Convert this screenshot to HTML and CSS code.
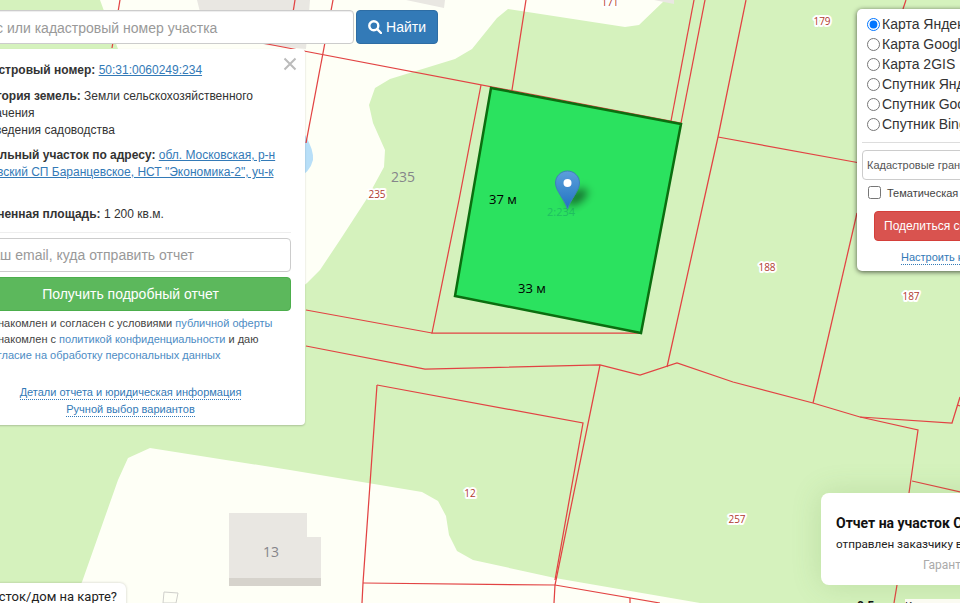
FILE: index.html
```html
<!DOCTYPE html>
<html lang="ru">
<head>
<meta charset="utf-8">
<title>Кадастровая карта</title>
<link rel="stylesheet" href="styles.css">
</head>
<body>
<main class="stage">
  <svg class="map" viewBox="0 0 960 603" width="960" height="603">
    <defs>
      <linearGradient id="pinFill" x1="0" y1="0" x2="0" y2="1">
        <stop offset="0" stop-color="#5c9fdb"/>
        <stop offset="1" stop-color="#1f72c2"/>
      </linearGradient>
      <filter id="blur" x="-60%" y="-60%" width="220%" height="220%"><feGaussianBlur stdDeviation="4"/></filter>
    </defs>
    <rect class="green" width="960" height="603"/>
    <polygon class="cream" points="100,0 665,0 639,25 625,27 508,9 497,18 472,49 455,59 390,79 375,88 369,105 373,123 385,150 384,167 366,200 340,240 320,270 307,283 250,330 118,330 118,49"/>
    <polygon class="cream" points="70,603 82,582 118,480 128,458 150,448 290,470 422,492 438,501 446,516 449,535 457,551 473,560 555,578 700,603"/>
    <path class="water" d="M305,135 Q314,150 313,160 Q310,172 298,178 L298,135 Z"/>
    <polygon class="bld" points="197,0 310,0 306,49 265,45 200,12"/>
    <polygon class="bld" points="406,0 445,0 444,8"/>
    <polygon class="bld" points="654,0 674,0 674,4"/>
    <polygon class="bld" points="229,513 307,513 307,537 321,537 321,586 229,586"/>
    <rect class="bld-side" x="229" y="578" width="92" height="8"/>
    <polygon class="shed" points="164,592 178,593 176,603 163,603"/>
    <g class="lines">
      <path d="M120,0 L112,48"/>
      <path d="M295,0 L288,44"/>
      <path d="M333,0 L306,143"/>
      <path d="M262,43 L681,123"/>
      <path d="M481,85 L459,200 L432,333 L642,333"/>
      <path d="M526,0 L512,90"/>
      <path d="M694,0 L671,121"/>
      <path d="M705,0 L681,123"/>
      <path d="M746,0 L718,137 L704,200 L667,367"/>
      <path d="M718,137 L860,163"/>
      <path d="M906,0 L903,9"/>
      <path d="M857,213 L813,403"/>
      <path d="M306,310 L432,333"/>
      <path d="M306,346 L425,369 L600,365 L640,375 L677,363 L733,382 L813,403 L860,417 L918,430 L909,493"/>
      <path d="M860,417 L952,423 L960,397"/>
      <path d="M957,405 L960,406"/>
      <path d="M912,481 L960,492"/>
      <path d="M897,585 L894,603"/>
      <path d="M600,365 L555,585 L554,603"/>
      <path d="M377,385 L583,423 L555,580"/>
      <path d="M377,385 L363,583 L362,603"/>
      <path d="M363,583 L555,585 L660,603"/>
      <path d="M630,598 L630,603"/>
    </g>
    <polygon class="plot" points="491,88 681,124 641,333 455,296"/>
    <text class="num" x="610" y="6">171</text>
    <text class="num" x="822" y="25">179</text>
    <text class="num" x="377" y="198">235</text>
    <text class="num" x="767" y="271">188</text>
    <text class="num" x="911" y="300">187</text>
    <text class="num" x="470" y="497">12</text>
    <text class="num" x="737" y="523">257</text>
    <text class="addr" x="403" y="182">235</text>
    <text class="addr" x="271" y="557">13</text>
    <text class="plot-num" x="561" y="216">2:234</text>
    <text class="measure" x="489" y="204">37 м</text>
    <text class="measure" x="518" y="293">33 м</text>
    <ellipse class="pin-shadow" cx="577" cy="197" rx="12" ry="6" transform="rotate(-35 577 197)" filter="url(#blur)"/>
    <path class="pin" d="M567.500,209 C565,200 555.500,191 555.500,183 C555.500,176 561,171 567.500,171 C574,171 579.500,176 579.500,183 C579.500,191 570,200 567.500,209 Z"/>
    <circle class="pin-dot" cx="567.500" cy="183" r="4"/>
  </svg>

  <form class="search">
    <input class="search-input" type="text" placeholder="Адрес или кадастровый номер участка">
    <button class="search-btn" type="button">
      <svg class="search-icon" viewBox="0 0 14 14" width="14" height="14"><circle cx="5.800" cy="5.800" r="4.500"/><path d="M9.200 9.200 L13 13"/></svg>
      Найти
    </button>
  </form>

  <section class="info">
    <svg class="close" viewBox="0 0 14 14" width="14" height="14"><path d="M1.500 1.500 L12.500 12.500 M12.500 1.500 L1.500 12.500"/></svg>
    <p class="row row-first"><b>Кадастровый номер:</b> <a href="#">50:31:0060249:234</a></p>
    <p class="row"><b>Категория земель:</b> Земли сельскохозяйственного<br>назначения<br>Для ведения садоводства</p>
    <p class="row"><b>Земельный участок по адресу:</b> <a href="#">обл. Московская, р-н<br>Чеховский СП Баранцевское, НСТ "Экономика-2", уч-к</a><br>&nbsp;</p>
    <p class="row"><b>Уточненная площадь:</b> 1 200 кв.м.</p>
    <hr class="rule">
    <input class="email" type="text" placeholder="Ваш email, куда отправить отчет">
    <button class="get" type="button">Получить подробный отчет</button>
    <p class="terms">Я ознакомлен и согласен с условиями <a href="#">публичной оферты</a><br>Я ознакомлен с <a href="#">политикой конфиденциальности</a> и даю<br><a class="shift" href="#">согласие на обработку персональных данных</a></p>
    <div class="more">
      <a href="#">Детали отчета и юридическая информация</a>
      <a href="#">Ручной выбор вариантов</a>
    </div>
  </section>

  <section class="layers">
    <div class="radios">
      <label><input type="radio" name="m" checked>Карта Яндекс</label>
      <label><input type="radio" name="m">Карта Google</label>
      <label><input type="radio" name="m">Карта 2GIS</label>
      <label><input type="radio" name="m">Спутник Яндекс</label>
      <label><input type="radio" name="m">Спутник Google</label>
      <label><input type="radio" name="m">Спутник Bing</label>
    </div>
    <hr class="layers-rule">
    <select class="borders"><option>Кадастровые границы</option></select>
    <label class="theme"><input type="checkbox">Тематическая карта</label>
    <button class="share" type="button">Поделиться ссылкой</button>
    <a class="tune" href="#">Настроить карту</a>
  </section>

  <aside class="toast">
    <strong>Отчет на участок СНТ</strong>
    <span>отправлен заказчику в течение</span>
    <em>Гарантия качества</em>
  </aside>

  <div class="where">Где участок/дом на карте?</div>
  <div class="scale">0.5 км</div>
  <div class="corner">Контакты</div>
</main>
</body>
</html>
```
FILE: styles.css
```css
* { box-sizing: border-box; }
html, body { margin: 0; height: 100%; overflow: hidden; }
body { font-family: "Liberation Sans", Arial, sans-serif; font-size: 12px; color: #333; }
a { color: #337ab7; }
.stage { position: relative; width: 960px; height: 603px; overflow: hidden; background: #d5f2bd; }
.map { display: block; }
.green { fill: #d5f2bd; }
.cream { fill: #fefff6; }
.water { fill: #b8dff8; }
.bld { fill: #e9e7e2; }
.bld-side { fill: #d6d3cc; }
.shed { fill: #fefff6; stroke: #cfcfcb; stroke-width: 1; }
.lines path { fill: none; stroke: #e24343; stroke-width: 1.250; }
.plot { fill: #2be25f; stroke: #0b6e10; stroke-width: 2.500; stroke-linejoin: miter; }
.num { font: 10px "Open Sans", sans-serif; fill: #b03a2e; text-anchor: middle; paint-order: stroke; stroke: #fff; stroke-width: 4px; stroke-linejoin: round; }
.addr { font: 14px "Open Sans", sans-serif; fill: #85858a; text-anchor: middle; }
.plot-num { font: 11px "Open Sans", sans-serif; fill: #20bf62; text-anchor: middle; }
.measure { font: 13px "Open Sans", sans-serif; fill: #000; }
.pin { fill: url(#pinFill); stroke: #3f7fba; stroke-width: 1; }
.pin-dot { fill: #fff; }
.pin-shadow { fill: rgba(0, 0, 0, .5); }

.search { position: absolute; left: -50px; top: 10px; display: flex; gap: 2px; }
.search-input { width: 404px; height: 34px; padding: 7px 12px 5px; border: 1px solid #ccc; border-radius: 4px; background: #fff; font: 14px "Liberation Sans", sans-serif; box-shadow: inset 0 1px 1px rgba(0,0,0,.075); }
.search-input::placeholder, .email::placeholder { color: #999; opacity: 1; }
.search-btn { display: flex; align-items: center; justify-content: center; gap: 4px; width: 82px; height: 34px; border: 1px solid #2e6da4; border-radius: 4px; background: #337ab7; color: #fff; font: 14px "Liberation Sans", sans-serif; padding: 0; }
.search-icon { fill: none; stroke: #fff; stroke-width: 2.400; stroke-linecap: round; }

.info { position: absolute; left: -45px; top: 49px; width: 350px; height: 376px; padding: 13px 14px 0 15px; background: #fff; border-radius: 4px; box-shadow: 0 1px 2px rgba(0,0,0,.2); line-height: 17px; }
.close { position: absolute; right: 8px; top: 8px; fill: none; stroke: #bbb; stroke-width: 2; }
.row { margin: 0 0 8px; }
.row-first { margin-bottom: 9px; }
.rule { height: 1px; margin: 9px 0 5px; border: 0; background: #eee; }
.email { display: block; width: 100%; height: 34px; padding: 6px 12px; border: 1px solid #ccc; border-radius: 4px; font: 14px "Liberation Sans", sans-serif; }
.get { display: block; width: 100%; height: 34px; margin-top: 5px; border: 1px solid #4cae4c; border-radius: 4px; background: #5cb85c; color: #fff; font: 14px "Liberation Sans", sans-serif; }
.terms { margin: 4px 0 0; padding-left: 6px; font-size: 11px; line-height: 16px; color: #444; }
.terms a { color: #4d8cc4; text-decoration: none; }
.terms .shift { margin-left: 10px; }
.more { display: flex; flex-direction: column; align-items: center; gap: 0; margin-top: 20px; font-size: 11px; line-height: 16px; }
.more a { text-decoration: none; border-bottom: 1px dotted #337ab7; line-height: 14px; padding-top: 2px; }

.layers { position: absolute; left: 857px; top: 9px; width: 230px; height: 262px; padding: 5px 5px 0; background: #fff; border-radius: 5px; box-shadow: 0 1px 5px rgba(0,0,0,.65); }
.radios label { display: flex; align-items: center; height: 20px; font-size: 14px; color: #333; }
.radios input { width: 13px; height: 13px; margin: 0 2px 0 5px; flex: none; }
.layers-rule { height: 1px; margin: 8px 0 7px; border: 0; background: #ddd; }
.borders { display: block; width: 220px; height: 30px; padding: 0; border: 1px solid #ccc; border-radius: 4px; background: #fff; color: #555; font: 11px "Liberation Sans", sans-serif; }
.theme { display: flex; align-items: center; height: 13px; margin: 6px 0 0 6px; font-size: 11px; color: #444; }
.theme input { width: 13px; height: 13px; margin: 0 6px 0 0; }
.share { display: block; width: 200px; height: 30px; margin: 12px 0 0 12px; border: 1px solid #d43f3a; border-radius: 4px; background: #d9534f; color: #fff; font: 12px "Liberation Sans", sans-serif; text-align: left; padding: 0 9px; }
.tune { display: inline-block; margin: 9px 0 0 39px; font-size: 11px; line-height: 14px; text-decoration: none; border-bottom: 1px dotted #337ab7; }

.toast { position: absolute; left: 821px; top: 493px; width: 220px; height: 92px; padding: 22px 15px 0; display: flex; flex-direction: column; background: #fff; border-radius: 8px; box-shadow: 0 0 30px rgba(90,140,60,.2); font-family: Roboto, sans-serif; color: #222; }
.toast strong { font-size: 14px; line-height: 17px; color: #111; white-space: nowrap; }
.toast span { margin-top: 4px; font-size: 11.700px; line-height: 17px; white-space: nowrap; }
.toast em { margin: 4px 0 0 87px; font-style: normal; font-size: 12px; line-height: 17px; color: #aaa; white-space: nowrap; }

.where { position: absolute; right: 834px; top: 583px; height: 30px; padding: 5px 9px 0; background: #fff; border-radius: 6px; box-shadow: 0 0 3px rgba(0,0,0,.2); font: 13px/18px Roboto, sans-serif; color: #222; white-space: nowrap; }
.scale { position: absolute; left: 857px; top: 598px; font: 700 12px/16px Roboto, sans-serif; color: #111; }
.corner { position: absolute; left: 905px; top: 599px; width: 70px; height: 14px; background: #fbfbf2; font: 11px/16px Roboto, sans-serif; color: #222; }
```
